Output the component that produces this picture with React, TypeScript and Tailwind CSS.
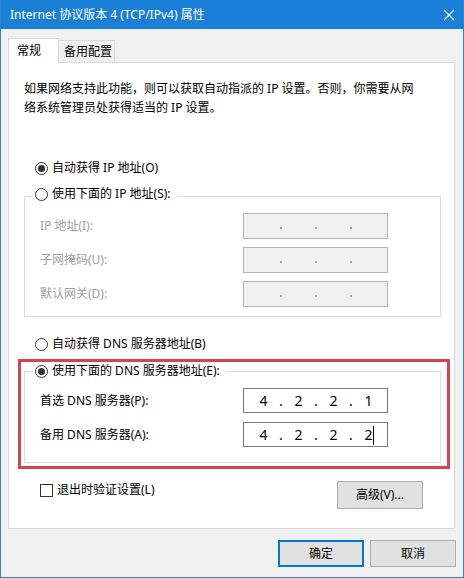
import React from "react"

const font = { fontFamily: "'Noto Sans', 'Noto Sans CJK SC', sans-serif" }

const Radio = ({ checked }: { checked?: boolean }) => (
  <span className="flex h-[13px] w-[13px] shrink-0 items-center justify-center rounded-full border border-[#333] bg-white">
    {checked && <span className="h-[7px] w-[7px] rounded-full bg-[#333]" />}
  </span>
)

const IpField = ({ values, disabled, h = "h-[26px]", caret }: { values?: string[]; disabled?: boolean; h?: string; caret?: boolean }) => {
  const segs = values || ["", "", "", ""]
  return (
    <div
      className={`flex w-[145px] items-center pl-[6px] ${h} border ${
        disabled ? "border-[#b4b4b4] bg-[#f0f0f0] text-[#a0a0a0]" : "border-[#7a7a7a] bg-white text-black"
      }`}
    >
      {segs.map((s, i) => (
        <React.Fragment key={i}>
          <span className="relative flex w-[27px] justify-center text-[14px] leading-[18px]">
            {s}
            {caret && i === 3 && <span className="absolute left-[18px] top-0 h-[19px] w-px bg-black" />}
          </span>
          {i < 3 &&
            (disabled ? (
              <span className="flex w-[8px] justify-center pt-[4px]">
                <span className="h-[2px] w-[2px] bg-[#a8a8a8]" />
              </span>
            ) : (
              <span className="flex w-[8px] justify-center text-[14px] leading-[18px]">.</span>
            ))}
        </React.Fragment>
      ))}
    </div>
  )
}

export default function App() {
  return (
    <div
      style={font}
      className="relative flex h-[578px] w-[464px] flex-col overflow-hidden border-x border-b border-[#2b84d6] bg-[#f0f0f0] text-[12px] text-black"
    >
      {/* title bar */}
      <div className="flex h-[29px] shrink-0 items-center justify-between bg-[#1a7fd6] pl-[9px] pr-[7px] text-white">
        <span className="text-[12px] leading-none">Internet 协议版本 4 (TCP/IPv4) 属性</span>
        <svg width="12" height="12" viewBox="0 0 12 12" className="mr-[1px]">
          <path d="M1 1 L11 11 M11 1 L1 11" stroke="white" strokeWidth="1.1" />
        </svg>
      </div>

      <div className="flex flex-col pl-[7px] pr-[7px] pt-[10px]">
        {/* tabs */}
        <div className="relative z-10 flex h-[23px] items-end">
          <div className="-mb-px flex h-[25px] w-[51px] items-center border border-b-0 border-[#d9d9d9] bg-white pl-[8px] leading-none">
            常规
          </div>
          <div className="flex h-[22px] w-[56px] items-center border border-b-0 border-l-0 border-[#d9d9d9] bg-[#f0f0f0] pl-[5px] leading-none">
            备用配置
          </div>
        </div>

        {/* panel */}
        <div className="flex h-[467px] w-[447px] flex-col border border-[#d9d9d9] bg-white">
          <p className="ml-[15px] mt-[16px] leading-[19px]">
            如果网络支持此功能，则可以获取自动指派的 IP 设置。否则，你需要从网
            <br />
            络系统管理员处获得适当的 IP 设置。
          </p>

          <div className="ml-[26px] mt-[41px] flex h-[20px] items-center gap-[4px]">
            <Radio checked />
            <span>自动获得 IP 地址(O)</span>
          </div>

          {/* manual IP group */}
          <div className="ml-[15px] mt-[18px] flex w-[417px] flex-col border border-[#dcdcdc] pb-[9px]">
            <div className="-mt-[13px] ml-[8px] flex h-[20px] items-center gap-[4px] self-start bg-white pl-[2px] pr-[6px]">
              <Radio />
              <span>使用下面的 IP 地址(S):</span>
            </div>
            <div className="mt-[9px] flex flex-col gap-[8px]">
              {["IP 地址(I):", "子网掩码(U):", "默认网关(D):"].map((l) => (
                <div key={l} className="flex items-center">
                  <span className="ml-[15px] w-[203px] text-[#a0a0a0]">{l}</span>
                  <IpField disabled />
                </div>
              ))}
            </div>
          </div>

          <div className="ml-[26px] mt-[17px] flex h-[20px] items-center gap-[4px]">
            <Radio />
            <span>自动获得 DNS 服务器地址(B)</span>
          </div>

          {/* manual DNS group */}
          <div className="ml-[15px] mt-[17px] flex w-[417px] flex-col border border-[#dcdcdc] pb-[15px]">
            <div className="-mt-[11px] ml-[8px] flex h-[20px] items-center gap-[4px] self-start bg-white pl-[2px] pr-[6px]">
              <Radio checked />
              <span>使用下面的 DNS 服务器地址(E):</span>
            </div>
            <div className="mt-[7px] flex flex-col gap-[9px]">
              <div className="flex items-center">
                <span className="ml-[15px] w-[203px]">首选 DNS 服务器(P):</span>
                <IpField values={["4", "2", "2", "1"]} h="h-[25px]" />
              </div>
              <div className="flex items-center">
                <span className="ml-[15px] w-[203px]">备用 DNS 服务器(A):</span>
                <IpField values={["4", "2", "2", "2"]} h="h-[25px]" caret />
              </div>
            </div>
          </div>

          <div className="mt-[18px] flex items-start">
            <div className="ml-[31px] mt-[1px] flex h-[16px] items-center gap-[4px]">
              <span className="h-[13px] w-[13px] border border-[#333] bg-white" />
              <span>退出时验证设置(L)</span>
            </div>
            <div className="ml-auto mr-[31px] flex h-[28px] w-[86px] items-center justify-center border border-[#adadad] bg-[#e1e1e1]">
              高级(V)...
            </div>
          </div>
        </div>

        {/* dialog buttons */}
        <div className="mt-[11px] flex justify-end gap-[6px]">
          <div className="flex h-[27px] w-[86px] items-center justify-center border-2 border-[#0078d7] bg-[#e1e1e1]">确定</div>
          <div className="flex h-[27px] w-[86px] items-center justify-center border border-[#adadad] bg-[#e1e1e1]">取消</div>
        </div>
      </div>

      {/* red annotation box */}
      <div className="pointer-events-none absolute left-[17px] top-[359px] h-[110px] w-[432px] border-[3px] border-[#d9434e]" />
    </div>
  )
}
